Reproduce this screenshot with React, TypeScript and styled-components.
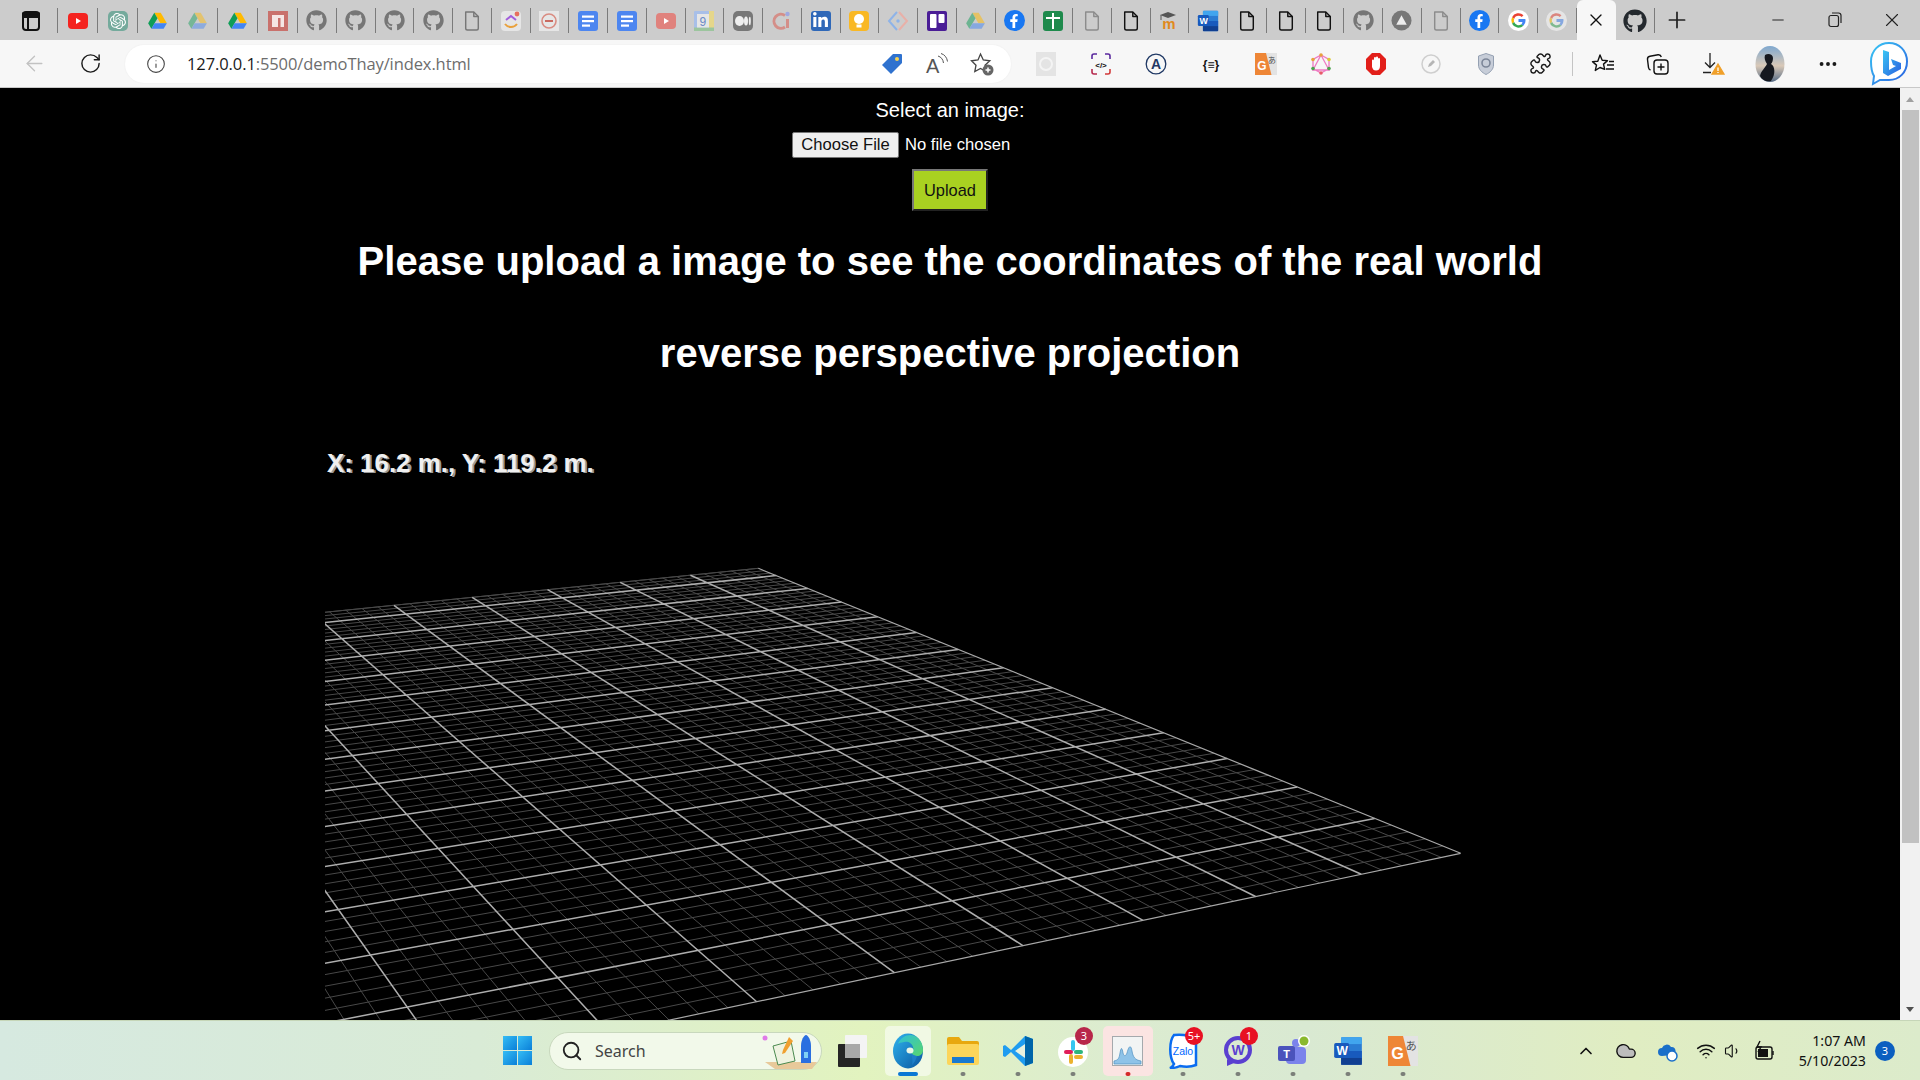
import React, { useMemo } from "react";
import styled, { createGlobalStyle } from "styled-components";
import { ArrowLeft, RotateCw, Info, Puzzle, MoreHorizontal, Plus, X, Minus, Search, ChevronUp, Wifi, Volume1, Cloud } from "lucide-react";
import { FaGithub, FaLinkedinIn, FaFacebookF } from "react-icons/fa";
import { SiOpenai } from "react-icons/si";

const Global = createGlobalStyle`
  html, body { margin: 0; padding: 0; overflow: hidden; background: #000; }
  * { box-sizing: border-box; }
  #root { font-family: "Liberation Sans", Arial, sans-serif; }
`;

const Shell = styled.div`width: 1920px; height: 1080px; display: flex; flex-direction: column; overflow: hidden;`;
const TabStrip = styled.div`height: 40px; background: #cccccc; display: flex; align-items: flex-start; flex: none;`;
const WindowBtn = styled.div`width: 58px; height: 25px; margin-top: 8px; display: flex; align-items: center; padding-left: 21px; border-right: 1px solid #7b7b7b;`;
const TabSlot = styled.div<{ $dim?: number; $pinned?: boolean }>`
  width: ${(p) => (p.$pinned ? "40px" : "38.76px")}; height: 25px; margin-top: 8px; flex: none;
  display: flex; align-items: center; justify-content: center;
  border-right: 1px solid #7b7b7b;
  & > * { opacity: ${(p) => p.$dim ?? 1}; }
`;
const ActiveTab = styled.div`
  width: 39px; height: 40px; flex: none; background: #f7f7f7; border-radius: 6px 6px 0 0;
  display: flex; align-items: center; justify-content: center; color: #111;
`;
const NewTab = styled.div`width: 44px; height: 40px; display: flex; align-items: center; justify-content: center; color: #222;`;
const WinControls = styled.div`margin-left: auto; display: flex; height: 40px;`;
const WinControl = styled.div`width: 57px; height: 40px; display: flex; align-items: center; justify-content: center; color: #222;`;

const Toolbar = styled.div`height: 48px; flex: none; background: #f7f7f7; border-bottom: 1px solid #c8c8c8; display: flex; align-items: center;`;
const NavBtn = styled.div<{ $w: number }>`width: ${(p) => p.$w}px; height: 38px; flex: none; display: flex; align-items: center; justify-content: center;`;
const Omnibox = styled.div`width: 886px; height: 38px; flex: none; margin-left: 13px; background: #fff; border-radius: 19px; display: flex; align-items: center; box-shadow: 0 0 2px rgba(0,0,0,.06);`;
const InfoSlot = styled.div`width: 62px; flex: none; display: flex; justify-content: center; color: #444;`;
const Url = styled.div`flex: 1; font-family: "Open Sans", sans-serif; font-size: 16.5px; color: #6d6d6d; white-space: nowrap; letter-spacing: -0.1px;`;
const Host = styled.span`color: #1a1a1a;`;
const OmniIcons = styled.div`display: flex; align-items: center; margin-right: 7px;`;
const OmniIcon = styled.div`width: 45px; display: flex; justify-content: center; align-items: center;`;
const ToolIcons = styled.div`display: flex; align-items: center; margin-left: 7px;`;
const ToolSlot = styled.div<{ $w?: number }>`width: ${(p) => p.$w ?? 55}px; height: 38px; flex: none; display: flex; align-items: center; justify-content: center; color: #1a1a1a;`;
const BingSlot = styled.div`width: 52px; height: 46px; flex: none; display: flex; align-items: center; justify-content: flex-end;`;
const ToolSep = styled.div`width: 1px; height: 24px; background: #c4c4c4; margin: 0 2px 0 4px; flex: none;`;

const Viewport = styled.div`flex: 1; min-height: 0; display: flex; background: #000; overflow: hidden;`;
const Page = styled.main`flex: 1; min-width: 0; display: flex; flex-direction: column; align-items: center; color: #fff; padding-top: 11px;`;
const Label = styled.label`font-size: 20px; line-height: 23px; color: #fff;`;
const FileInput = styled.input`
  display: block; width: 316px; height: 26px; margin-top: 10px; color: #fff;
  font: 16.6px "Liberation Sans", Arial, sans-serif;
  &::file-selector-button {
    width: 107px; height: 26px; padding: 0; margin: 0 6px 0 0; background: #efefef; color: #111;
    border: 1px solid #767676; border-radius: 2px; font: inherit;
  }
`;
const UploadBtn = styled.button`
  width: 76px; height: 42px; margin-top: 11px; padding: 0; flex: none; background: #a9d121; color: #111;
  border: 2px outset #777; font: 16.4px "Liberation Sans", Arial, sans-serif;
`;
const Title = styled.h1<{ $first?: boolean }>`
  margin: ${(p) => (p.$first ? "27px 0 46px" : "0 0 46px")}; font-size: 40px; line-height: 46px; font-weight: 700; color: #fff; white-space: nowrap; text-align: center;
`;
const CanvasFrame = styled.div`position: relative; width: 1250px; height: 640px; flex: none;`;
const GridSvg = styled.svg`display: block;`;
const Readout = styled.div`position: absolute; left: 4px; top: 27px; font-size: 25.9px; line-height: 30px; font-weight: 700; color: #9a9a9a; white-space: nowrap;`;
const ReadoutGhost = styled.span`position: absolute; left: -2px; top: -1.4px; color: #f0f0f0;`;

const Scrollbar = styled.div`width: 20px; flex: none; background: #f1f1f1; display: flex; flex-direction: column; align-items: center;`;
const ScrollArrow = styled.div<{ $down?: boolean }>`
  height: 22px; flex: none; display: flex; align-items: center; justify-content: center;
  &::before { content: ""; border-left: 4.5px solid transparent; border-right: 4.5px solid transparent;
    ${(p) => (p.$down ? "border-top: 5px solid #505050;" : "border-bottom: 5px solid #a0a0a0;")} }
`;
const ScrollThumb = styled.div`width: 17px; height: 733px; background: #c1c1c1; flex: none;`;
const ScrollRest = styled.div`flex: 1;`;

const Taskbar = styled.footer`
  height: 60px; flex: none; display: flex; align-items: center; padding-left: 503px; border-top: 1px solid #c6d6b8;
  background: linear-gradient(90deg, #d6e9e0 0%, #d9ebd6 25%, #e2f3bf 45%, #dcecd0 58%, #d9e9d2 68%, #e0edc2 85%, #dcebcb 100%);
`;
const StartBtn = styled.div`width: 29px; height: 29px; flex: none; display: grid; grid-template-columns: 1fr 1fr; grid-template-rows: 1fr 1fr; gap: 1.5px;`;
const Pane = styled.div`background: linear-gradient(135deg, #35bdf5, #0a7fd8);`;
const SearchPill = styled.div`
  width: 273px; height: 38px; margin-left: 17px; flex: none; border-radius: 19px; background: #f2f9ea; border: 1px solid #c8d8bd;
  display: flex; align-items: center; padding-left: 11px; color: #222;
`;
const SearchText = styled.span`font-family: "Noto Sans", sans-serif; font-size: 16px; margin-left: 12px; color: #444; flex: 1;`;
const AppRow = styled.div`display: flex; margin-left: 3px;`;
const AppSlot = styled.div<{ $bg?: string; $w?: number }>`
  width: ${(p) => p.$w ?? 55}px; margin: 0 ${(p) => (55 - (p.$w ?? 55)) / 2}px; height: 50px; flex: none; position: relative;
  display: flex; align-items: center; justify-content: center; border-radius: 5px;
  background: ${(p) => p.$bg ?? "transparent"};
`;
const Indicator = styled.span<{ $c?: string; $w?: number }>`
  position: absolute; bottom: 0; left: 50%; transform: translateX(-50%); height: 4px; border-radius: 2px;
  width: ${(p) => p.$w ?? 5}px; background: ${(p) => p.$c ?? "#7b7f79"};
`;
const Badge = styled.span<{ $c?: string }>`
  position: absolute; top: 1px; right: 7px; min-width: 18px; height: 18px; border-radius: 9px; background: ${(p) => p.$c ?? "#e81123"}; color: #fff;
  font: 11px/18px "Noto Sans", sans-serif; text-align: center; padding: 0 2px;
`;
const Tray = styled.div`margin-left: auto; display: flex; align-items: center; padding-right: 25px; color: #111;`;
const TraySlot = styled.div<{ $w: number }>`width: ${(p) => p.$w}px; flex: none; display: flex; justify-content: center; align-items: center;`;
const Clock = styled.div`width: 78px; flex: none; text-align: right; font-family: "Noto Sans", sans-serif; font-size: 14.2px; line-height: 20px; color: #111; white-space: nowrap;`;
const Notif = styled.div`width: 20px; height: 20px; border-radius: 50%; background: #0b5fc0; color: #fff; font: 11px/20px "Noto Sans", sans-serif; text-align: center; margin-left: 9px;`;

const SquareLogo = styled.div<{ $bg: string; $r?: number; $s?: number }>`
  width: ${(p) => p.$s ?? 20}px; height: ${(p) => p.$s ?? 20}px; border-radius: ${(p) => p.$r ?? 3}px; background: ${(p) => p.$bg}; color: #fff;
  display: flex; align-items: center; justify-content: center;
`;

const tf = "'Liberation Sans', Arial, sans-serif";

const Drive = ({ s = 21 }: { s?: number }) => (
  <svg width={s} height={s} viewBox="0 0 24 24"><path d="M8.3 3h7.4l7 12h-7.400z" fill="#ffba00" /><path d="M8.3 3 1.3 15l3.7 6.500 7-12.200z" fill="#0f9d58" /><path d="M5 21.500h14l3.700-6.500H8.700z" fill="#4285f4" /></svg>
);
const FileIco = ({ c = "#111" }: { c?: string }) => (
  <svg width="18" height="22" viewBox="0 0 20 24" fill="none" stroke={c} strokeWidth="1.6" strokeLinejoin="round"><path d="M3 2h9l5 5v13a2 2 0 0 1-2 2H5a2 2 0 0 1-2-2z" /><path d="M12 2v5h5" /></svg>
);
const Yt = ({ c = "#f4231f" }: { c?: string }) => (
  <svg width="22" height="20" viewBox="0 0 22 20"><rect x="1" y="2" width="20" height="16" rx="4" fill={c} /><path d="M9 7l5 3-5 3z" fill="#fff" /></svg>
);
const Docs = () => (
  <svg width="20" height="20" viewBox="0 0 20 20"><rect width="20" height="20" rx="3" fill="#4d86f0" /><rect x="4" y="4.500" width="12" height="2.200" fill="#fff" /><rect x="4" y="9" width="12" height="2.200" fill="#fff" /><rect x="4" y="13.500" width="8" height="2.200" fill="#fff" /></svg>
);
const GoogleG = () => (
  <svg width="21" height="21" viewBox="0 0 24 24"><circle cx="12" cy="12" r="12" fill="#fff" /><path d="M12 6.500a5.500 5.500 0 0 1 3.700 1.400l2-2A8.300 8.300 0 0 0 4.600 8.300l2.400 1.900A5.300 5.300 0 0 1 12 6.500z" fill="#ea4335" /><path d="M4.600 8.300a8.300 8.300 0 0 0 0 7.400L7 13.800a5.300 5.300 0 0 1 0-3.600z" fill="#fbbc05" /><path d="M4.600 15.700A8.300 8.300 0 0 0 17.600 18l-2.300-1.800A5.300 5.300 0 0 1 7 13.800z" fill="#34a853" /><path d="M20 12c0-.5 0-1-.2-1.600H12v3.200h4.500a4 4 0 0 1-1.200 2.600l2.300 1.800A8.300 8.300 0 0 0 20 12z" fill="#4285f4" /></svg>
);
const Fb = () => (<SquareLogo $bg="#1877f2" $r={10.5} $s={21}><FaFacebookF size={14} /></SquareLogo>);
const Gh = ({ c = "#767676", s = 21 }: { c?: string; s?: number }) => <FaGithub size={s} color={c} />;
const GTrans = ({ s = 24 }: { s?: number }) => (
  <svg width={s} height={s} viewBox="0 0 24 24"><path d="M12 0h12v24H8z" fill="#e3e3e3" /><path d="M0 0h12l6 24H0z" fill="#ee8636" /><text x="2.500" y="18" fontFamily={tf} fontWeight="700" fontSize="13" fill="#fff">G</text><text x="14" y="11" fontFamily="'Noto Sans CJK JP', sans-serif" fontSize="9" fill="#555">あ</text></svg>
);
const WordIco = ({ s = 22 }: { s?: number }) => (
  <svg width={s} height={s} viewBox="0 0 26 26"><rect x="7" y="1" width="18" height="24" rx="1.500" fill="#2b7cd3" /><rect x="7" y="1" width="18" height="6" fill="#41a5ee" /><rect x="7" y="13" width="18" height="6" fill="#185abd" /><rect x="7" y="19" width="18" height="6" fill="#103f91" /><rect x="1" y="6" width="13" height="13" rx="1.500" fill="#185abd" /><text x="3" y="16.500" fontFamily={tf} fontWeight="700" fontSize="10.500" fill="#fff">W</text></svg>
);
const Moodle = () => (
  <svg width="24" height="22" viewBox="0 0 24 22"><path d="M3 5l8-3 8 3-8 3z" fill="#555" /><path d="M4 5v5" stroke="#555" strokeWidth="1" /><text x="12" y="19" textAnchor="middle" fontFamily={tf} fontWeight="700" fontSize="15" fill="#e08a1e">m</text></svg>
);

const tabs: [React.ReactNode, number?][] = [
  [<Yt />], [<SquareLogo $bg="#74aa9c" $r={5}><SiOpenai size={16} /></SquareLogo>], [<Drive />], [<Drive />, 0.45], [<Drive />],
  [<SquareLogo $bg="#c9716c" $r={0}><svg width="14" height="14" viewBox="0 0 14 14"><path d="M1 1h12v12H9.500V4H7v9H1z" fill="#f5e6e4" /></svg></SquareLogo>],
  [<Gh />], [<Gh />], [<Gh />], [<Gh />],
  [<FileIco c="#777" />],
  [<svg width="20" height="20" viewBox="0 0 20 20"><rect width="20" height="20" rx="4" fill="#e6e6e6" /><path d="M4 13c3 4 9 4 12 0" fill="none" stroke="#e9a13c" strokeWidth="2" /><path d="M5 9l5-4 5 4" fill="none" stroke="#a25ddc" strokeWidth="2" /><circle cx="16" cy="3" r="2.400" fill="#e6705f" /></svg>],
  [<svg width="20" height="20" viewBox="0 0 20 20"><rect width="20" height="20" fill="#e6e6e6" /><circle cx="10" cy="10" r="7" fill="none" stroke="#d98c82" strokeWidth="1.600" /><rect x="6" y="9" width="8" height="2" fill="#c96a60" /></svg>],
  [<Docs />], [<Docs />], [<Yt c="#e0827d" />],
  [<svg width="20" height="20" viewBox="0 0 20 20"><rect width="20" height="20" rx="1" fill="#a8bfe8" /><rect x="15" width="5" height="20" fill="#e5d68a" /><rect y="16.500" width="20" height="3.500" fill="#9cc59e" /><rect x="3" y="3" width="12" height="13.500" fill="#e6e6e6" /><text x="5.500" y="14.500" fontFamily={tf} fontSize="12" fill="#6b8bc8">9</text></svg>],
  [<SquareLogo $bg="#777" $r={5}><svg width="16" height="10" viewBox="0 0 16 10"><ellipse cx="4.500" cy="5" rx="4.500" ry="5" fill="#eee" /><ellipse cx="11" cy="5" rx="2" ry="4.600" fill="#eee" /><ellipse cx="14.800" cy="5" rx="1" ry="4.200" fill="#eee" /></svg></SquareLogo>],
  [<svg width="20" height="22" viewBox="0 0 20 22" fill="none"><path d="M13 5.500A7 7 0 1 0 13 17" stroke="#d48e88" strokeWidth="3" /><path d="M15.500 9v9" stroke="#d48e88" strokeWidth="3" /><circle cx="15.500" cy="4" r="2.200" fill="#9fa8e0" /></svg>],
  [<SquareLogo $bg="#2f68b8"><FaLinkedinIn size={17} /></SquareLogo>],
  [<SquareLogo $bg="#f9b824" $r={4}><svg width="12" height="16" viewBox="0 0 12 16"><circle cx="6" cy="6" r="5" fill="#fff" /><rect x="3.500" y="11.500" width="5" height="3" fill="#fff" /></svg></SquareLogo>],
  [<svg width="22" height="22" viewBox="0 0 22 22" fill="none"><path d="M10 2 2 11l8 9" stroke="#8eb3e8" strokeWidth="2" /><path d="M12 2l8 9-8 9" stroke="#e8b0a8" strokeWidth="2" /><circle cx="11" cy="11" r="1.700" fill="#8eb3e8" /></svg>],
  [<svg width="20" height="20" viewBox="0 0 20 20"><rect width="20" height="20" rx="2" fill="#4a1d96" /><rect x="3" y="3" width="6.500" height="14" rx="1" fill="#fff" /><rect x="11.500" y="3" width="6" height="9" rx="1" fill="#fff" /></svg>],
  [<Drive />, 0.5], [<Fb />],
  [<SquareLogo $bg="#1e8a4c"><svg width="14" height="16" viewBox="0 0 14 16"><rect y="4" width="14" height="2" fill="#fff" /><rect x="6" width="2" height="16" fill="#fff" /></svg></SquareLogo>],
  [<FileIco c="#8c8c8c" />], [<FileIco />],
  [<Moodle />], [<WordIco />],
  [<FileIco />], [<FileIco />], [<FileIco />],
  [<Gh />],
  [<svg width="21" height="21" viewBox="0 0 22 22"><circle cx="11" cy="11" r="10.500" fill="#777" /><path d="M11 5.500l5.500 10h-11z" fill="#ededed" /></svg>],
  [<FileIco c="#8c8c8c" />], [<Fb />], [<GoogleG />], [<GoogleG />, 0.5],
];

const grid = () => {
  const [x0, y0] = [1460.7, 853.3];
  const [x1, y1] = [756.7, 1001.7];
  const [x2, y2] = [313, 613.5];
  const [x3, y3] = [758.3, 568.3];
  const S = 6, T = 13.6;
  const dx1 = x1 - x2, dx2 = x3 - x2, sx = x0 - x1 + x2 - x3;
  const dy1 = y1 - y2, dy2 = y3 - y2, sy = y0 - y1 + y2 - y3;
  const den = dx1 * dy2 - dx2 * dy1;
  const g = (sx * dy2 - dx2 * sy) / den;
  const h = (dx1 * sy - sx * dy1) / den;
  const a = x1 - x0 + g * x1, b = x3 - x0 + h * x3, d = y1 - y0 + g * y1, e = y3 - y0 + h * y3;
  const P = (s: number, t: number) => {
    const u = s / S, v = t / T;
    const w = g * u + h * v + 1;
    return [((a * u + b * v + x0) / w - 325).toFixed(1), ((d * u + e * v + y0) / w - 422).toFixed(1)];
  };
  const Smax = 16;
  const major: string[] = [], minor: string[] = [], edge: string[] = [];
  const seg = (p: string[], q: string[]) => `M${p[0]} ${p[1]}L${q[0]} ${q[1]}`;
  for (let i = 0; i <= Smax * 5; i++) {
    const s = i / 5;
    const path = seg(P(s, 0), P(s, T));
    (i === 0 ? edge : i % 5 === 0 ? major : minor).push(path);
  }
  for (let i = 0; i <= 68; i++) {
    const t = i / 5;
    const path = seg(P(0, t), P(Smax, t));
    (i === 0 ? edge : i % 5 === 0 ? major : minor).push(path);
  }
  minor.push(seg(P(0, T), P(Smax, T)));
  return { major: major.join(""), minor: minor.join(""), edge: edge.join("") };
};

export default function App() {
  const g = useMemo(grid, []);
  return (
    <Shell>
      <Global />
      <TabStrip>
        <WindowBtn>
          <svg width="20" height="22" viewBox="0 0 20 22" fill="none" stroke="#111" strokeWidth="2"><rect x="2" y="2" width="16" height="18" rx="3" /><path d="M2 3.500h16V7H2z" fill="#111" /><path d="M7 7v13" /></svg>
        </WindowBtn>
        {tabs.map(([node, dim], i) => (
          <TabSlot key={i} $dim={dim} $pinned={i < 6}>{node}</TabSlot>
        ))}
        <ActiveTab><X size={20} strokeWidth={1.6} /></ActiveTab>
        <TabSlot><Gh c="#24292e" s={24} /></TabSlot>
        <NewTab><Plus size={26} strokeWidth={1.6} /></NewTab>
        <WinControls>
          <WinControl><Minus size={18} strokeWidth={1.3} /></WinControl>
          <WinControl>
            <svg width="16" height="18" viewBox="0 0 16 18" fill="none" stroke="#222" strokeWidth="1.2"><rect x="2" y="4.500" width="9.500" height="11" rx="2" /><path d="M5 2h6.500A2.500 2.500 0 0 1 14 4.500V12" /></svg>
          </WinControl>
          <WinControl><X size={22} strokeWidth={1.2} /></WinControl>
        </WinControls>
      </TabStrip>

      <Toolbar>
        <NavBtn $w={68}><ArrowLeft size={25} strokeWidth={1.3} color="#c2c2c2" /></NavBtn>
        <NavBtn $w={44}><RotateCw size={23} strokeWidth={1.5} color="#1a1a1a" /></NavBtn>
        <Omnibox>
          <InfoSlot><Info size={20} strokeWidth={1.3} /></InfoSlot>
          <Url><Host>127.0.0.1</Host>:5500/demoThay/index.html</Url>
          <OmniIcons>
            <OmniIcon>
              <svg width="22" height="24" viewBox="0 0 22 24"><path d="M12 2h8a1 1 0 0 1 1 1v8L10 22 1 13z" fill="#2f72cf" /><circle cx="16" cy="7" r="2" fill="#f5d354" /></svg>
            </OmniIcon>
            <OmniIcon>
              <svg width="24" height="24" viewBox="0 0 24 24" fill="none" stroke="#555" strokeWidth="1"><text x="1" y="21" fontFamily={tf} fontSize="20" fill="#555" stroke="none">A</text><path d="M13 4c3 1 5 3 5.500 7M16 1.500c3.500 1 6 4 6.500 8" /></svg>
            </OmniIcon>
            <OmniIcon>
              <svg width="24" height="24" viewBox="0 0 24 24" fill="none" stroke="#444" strokeWidth="1.3"><path d="M10.500 2l2.800 6 6.500.8-4.800 4.400 1.200 6.400-5.700-3.200-5.700 3.200 1.200-6.400L1.500 8.800 8 8z" /><circle cx="18" cy="18" r="5.500" fill="#666" stroke="none" /><path d="M18 15.500v5M15.500 18h5" stroke="#fff" strokeWidth="1.5" /></svg>
            </OmniIcon>
          </OmniIcons>
        </Omnibox>
        <ToolIcons>
          <ToolSlot><svg width="20" height="24" viewBox="0 0 20 24"><rect width="20" height="24" fill="#e4e4e4" /><circle cx="10" cy="12" r="6" fill="none" stroke="#f4f4f4" strokeWidth="2" /></svg></ToolSlot>
          <ToolSlot>
            <svg width="20" height="24" viewBox="0 0 20 24" fill="none" strokeWidth="1.600"><path d="M1 7V4a2 2 0 0 1 2-2h3" stroke="#5b2a9e" /><path d="M14 2h3a2 2 0 0 1 2 2v3" stroke="#5b2a9e" /><path d="M1 17v3a2 2 0 0 0 2 2h3" stroke="#b62a4e" /><path d="M14 22h3a2 2 0 0 0 2-2v-3" stroke="#d23a3a" /><text x="10" y="15.500" textAnchor="middle" fontFamily={tf} fontWeight="700" fontSize="8" fill="#111" stroke="none">{"</>"}</text></svg>
          </ToolSlot>
          <ToolSlot>
            <svg width="22" height="22" viewBox="0 0 22 22" fill="none"><circle cx="11" cy="11" r="9.800" stroke="#1f3864" strokeWidth="1.300" /><text x="11" y="16" textAnchor="middle" fontFamily={tf} fontWeight="700" fontSize="14" fill="#1f3864">A</text></svg>
          </ToolSlot>
          <ToolSlot>
            <svg width="24" height="16" viewBox="0 0 24 16"><text x="12" y="12.500" textAnchor="middle" fontFamily={tf} fontWeight="700" fontSize="12" fill="#111">{"{≡}"}</text></svg>
          </ToolSlot>
          <ToolSlot><GTrans s={22} /></ToolSlot>
          <ToolSlot>
            <svg width="20" height="22" viewBox="0 0 20 22" fill="none"><path d="M10 2 18 17H2z M10 2 18 6.500v9L10 20 2 15.500v-9z" stroke="#ef7ac3" strokeWidth="1.300" /><circle cx="10" cy="2" r="1.800" fill="#e8a23c" /><circle cx="18" cy="6.500" r="1.800" fill="#dccb3a" /><circle cx="18" cy="15.500" r="1.800" fill="#4aa34e" /><circle cx="2" cy="6.500" r="1.800" fill="#e8a23c" /><circle cx="2" cy="15.500" r="1.800" fill="#4aa34e" /><circle cx="10" cy="20" r="1.800" fill="#e85a6a" /></svg>
          </ToolSlot>
          <ToolSlot>
            <svg width="22" height="24" viewBox="0 0 22 24"><path d="M7 1h8l6 6v10l-6 6H7l-6-6V7z" fill="#e21f1a" /><path d="M7 15V8.500a1 1 0 0 1 2 0V6a1 1 0 0 1 2 0v-.5a1 1 0 0 1 2 0V7a1 1 0 0 1 2 0v7c0 3-1.500 4.500-4 4.500s-3-1-4-3.500z" fill="#fff" /></svg>
          </ToolSlot>
          <ToolSlot>
            <svg width="20" height="20" viewBox="0 0 20 20" fill="none"><circle cx="10" cy="10" r="9" stroke="#cfcfcf" strokeWidth="1.500" /><path d="M7 13l1-3 4-4 2 2-4 4z" fill="#b5b5b5" /></svg>
          </ToolSlot>
          <ToolSlot>
            <svg width="18" height="24" viewBox="0 0 18 24" fill="none"><path d="M9 1.500 16.500 4v9c0 4.500-3.500 7.500-7.500 9.500C5 20.500 1.500 17.500 1.500 13V4z" fill="#c7cdd8" stroke="#94a0b2" /><circle cx="9" cy="11" r="4" stroke="#7c8698" strokeWidth="1.600" /></svg>
          </ToolSlot>
          <ToolSlot><Puzzle size={23} strokeWidth={1.5} /></ToolSlot>
          <ToolSep />
          <ToolSlot>
            <svg width="24" height="24" viewBox="0 0 24 24" fill="none" stroke="#111" strokeWidth="1.400" strokeLinejoin="round"><path d="M9 3l2.200 5.200 5.300.4-4 3.500 1.200 5.300L9 15.500l-4.700 2.900 1.200-5.300-4-3.500 5.300-.4z" /><path d="M16 13h7M15 17h8M18 9.500h5" /></svg>
          </ToolSlot>
          <ToolSlot>
            <svg width="24" height="24" viewBox="0 0 24 24" fill="none" stroke="#111" strokeWidth="1.400"><rect x="8" y="8" width="14" height="14" rx="3" /><path d="M15 11.500v7M11.500 15h7" /><path d="M4.500 18A3 3 0 0 1 2.500 15.500l-1-8A3 3 0 0 1 4 4.200l8-1.400a3 3 0 0 1 3.300 2.200" /></svg>
          </ToolSlot>
          <ToolSlot $w={56}>
            <svg width="24" height="24" viewBox="0 0 24 24" fill="none" stroke="#222" strokeWidth="1.300"><path d="M9 1v14M4 10.500l5 5 5-5M2 20.500h8" /><path d="M17 12l6 10H11z" fill="#f0a02a" stroke="#f0a02a" /><path d="M17 15.500v3.500M17 20v1" stroke="#fff" /></svg>
          </ToolSlot>
          <ToolSlot $w={58}>
            <svg width="30" height="36" viewBox="0 0 30 36"><defs><linearGradient id="sky" x1="0" y1="0" x2="0" y2="1"><stop offset="0" stopColor="#7fa8cf" /><stop offset="0.55" stopColor="#d9c9b8" /><stop offset="1" stopColor="#556a84" /></linearGradient></defs><ellipse cx="15" cy="18" rx="14.500" ry="18" fill="url(#sky)" /><path d="M10 9c3-2 8-1 8 3 0 3-1 5-2 6 4 2 5 10 0 17-5 1-9-1-11-5 1-5 5-8 7-12-2-3-3-6-2-9z" fill="#15181f" /></svg>
          </ToolSlot>
          <ToolSlot $w={58}><MoreHorizontal size={22} strokeWidth={2.2} /></ToolSlot>
          <BingSlot>
            <svg width="40" height="46" viewBox="0 0 40 46"><defs><linearGradient id="bing" x1="0" y1="0" x2="1" y2="1"><stop offset="0" stopColor="#39c6f4" /><stop offset="1" stopColor="#2a5fe0" /></linearGradient></defs><path d="M20 2c10 0 18 7.500 18 18.500S30 39 20 39H11l-7 4 1-8C2.500 31 2 26 2 20.500 2 9.500 10 2 20 2z" fill="#fff" stroke="url(#bing)" strokeWidth="2" /><path d="M14 9l6 2v18l7-4-3-1-2-6 10 4v6l-13 7-5-3z" fill="url(#bing)" /></svg>
          </BingSlot>
        </ToolIcons>
      </Toolbar>

      <Viewport>
        <Page>
          <Label htmlFor="img">Select an image:</Label>
          <FileInput id="img" type="file" />
          <UploadBtn type="button">Upload</UploadBtn>
          <Title $first>Please upload a image to see the coordinates of the real world</Title>
          <Title>reverse perspective projection</Title>
          <CanvasFrame>
            <GridSvg width="1250" height="640" viewBox="0 0 1250 640" fill="none" aria-hidden>
              <path d={g.minor} stroke="#484848" strokeWidth="1" />
              <path d={g.major} stroke="#aeaeae" strokeWidth="1.500" />
              <path d={g.edge} stroke="#a8a8a8" strokeWidth="1.200" />
            </GridSvg>
            <Readout>
              X: 16.3 m., Y: 119.3 m.
              <ReadoutGhost>X: 16.2 m., Y: 119.2 m.</ReadoutGhost>
            </Readout>
          </CanvasFrame>
        </Page>
        <Scrollbar>
          <ScrollArrow />
          <ScrollThumb />
          <ScrollRest />
          <ScrollArrow $down />
        </Scrollbar>
      </Viewport>

      <Taskbar>
        <StartBtn><Pane /><Pane /><Pane /><Pane /></StartBtn>
        <SearchPill>
          <Search size={22} strokeWidth={2} />
          <SearchText>Search</SearchText>
          <svg width="62" height="38" viewBox="0 0 62 38"><path d="M6 30h52l-5 7H16z" fill="#e8c99a" /><path d="M14 14l18-5 4 20-17 4z" fill="#eef3e0" stroke="#4b8a4f" /><path d="M30 5l4 4-8 12-3 1 1-4z" fill="#f0a030" /><path d="M42 14c0-6 3-11 5-11s5 5 5 11v17H42z" fill="#2a6fe0" /><path d="M45 20h4v6h-4z" fill="#7fd0f5" /><circle cx="6" cy="6" r="2.500" fill="#e07ae8" /></svg>
        </SearchPill>
        <AppRow>
          <AppSlot>
            <svg width="30" height="32" viewBox="0 0 30 32"><rect x="7" y="0" width="22" height="23" rx="1" fill="#f4f4f4" /><rect x="0" y="9" width="22" height="23" rx="1" fill="#252525" /><rect x="7" y="9" width="15" height="14" fill="#a8a8a8" /></svg>
          </AppSlot>
          <AppSlot $bg="rgba(255,255,255,.55)" $w={46}>
            <svg width="32" height="36" viewBox="0 0 32 36"><defs><linearGradient id="edge" x1="0" y1="0" x2="1" y2="1"><stop offset="0" stopColor="#2fb4ee" /><stop offset="1" stopColor="#0b56a0" /></linearGradient><linearGradient id="edgeg" x1="0" y1="0" x2="1" y2="1"><stop offset="0" stopColor="#2fc0d8" /><stop offset="1" stopColor="#58d66c" /></linearGradient></defs><ellipse cx="16" cy="18" rx="15" ry="17.500" fill="url(#edge)" /><path d="M6 11C9 3 17 0.500 23 3c6 3 8 9 8 14 0 4-3 6-6 6-3 0-5-1-6-3 2-1 3-3 2-6-1-4-5-6-9-5-3 .5-5 1-6 2z" fill="url(#edgeg)" /><path d="M19 20c2 2 4 3 6 3-1 4-3 7-5 9 1-4 0-8-1-12z" fill="#1d7ec9" /><ellipse cx="18" cy="17.500" rx="3.500" ry="3" fill="#eaf6e6" /></svg>
            <Indicator $c="#0a78d4" $w={20} />
          </AppSlot>
          <AppSlot>
            <svg width="34" height="30" viewBox="0 0 34 30"><path d="M1 3a2 2 0 0 1 2-2h10l3 4h15a2 2 0 0 1 2 2v4H1z" fill="#e8a80f" /><rect x="1" y="8" width="32" height="21" rx="2" fill="#fcd55a" /><rect x="6" y="21" width="22" height="6" fill="#1a7ad0" /></svg>
            <Indicator />
          </AppSlot>
          <AppSlot>
            <svg width="32" height="32" viewBox="0 0 32 32"><path d="M23 1 9 15 3 10 1 11v10l2 1 6-5 14 14 8-3V4z" fill="#1f9cf0" /><path d="M23 1v30l8-3V4z" fill="#0065a9" /><path d="M23 9 13 16l10 7z" fill="#e8f1e0" /></svg>
            <Indicator />
          </AppSlot>
          <AppSlot>
            <svg width="30" height="34" viewBox="0 0 30 34"><circle cx="15" cy="18" r="15" fill="#fff" /><rect x="13" y="6" width="4" height="11" rx="2" fill="#36c5f0" /><rect x="6" y="16" width="9" height="4" rx="2" fill="#e01e5a" /><rect x="16" y="16" width="9" height="4" rx="2" fill="#2eb67d" /><rect x="11" y="20" width="4" height="10" rx="2" fill="#ecb22e" /><rect x="16" y="21" width="9" height="4" rx="2" fill="#ecb22e" /></svg>
            <Badge $c="#b8274a">3</Badge>
            <Indicator />
          </AppSlot>
          <AppSlot $bg="#fbe4e2" $w={50}>
            <svg width="31" height="30" viewBox="0 0 31 30"><rect x="0.500" y="0.500" width="30" height="29" fill="#f2f4f4" stroke="#a5a9ad" /><path d="M2 25c4-1 5-2 6-8 1-6 2-6 3 0 1 4 3 3 4 0 2-8 4-8 5-2 1 6 3 9 9 10v3H2z" fill="#8fc3e8" stroke="#4f8fc0" strokeWidth=".7" /></svg>
            <Indicator $c="#d42a2a" />
          </AppSlot>
          <AppSlot>
            <svg width="30" height="36" viewBox="0 0 30 36"><path d="M6 2C1 8 1 24 6 31c-1 2-2 3-4 4 5 0 8-1 10-2 5 1 11 1 16-1V8C26 3 16 1 6 2z" fill="#fff" stroke="#0a6cf0" strokeWidth="2.500" /><text x="15" y="22" textAnchor="middle" fontFamily={tf} fontSize="10.500" fill="#0068ff">Zalo</text></svg>
            <Badge>5+</Badge>
            <Indicator />
          </AppSlot>
          <AppSlot>
            <svg width="30" height="32" viewBox="0 0 30 32" fill="none"><circle cx="15" cy="15" r="12" stroke="#5a3fd0" strokeWidth="4" /><text x="15" y="20" textAnchor="middle" fontFamily={tf} fontWeight="700" fontSize="14" fill="#5a3fd0">W</text><path d="M4 24v7l7-3z" fill="#5a3fd0" /></svg>
            <Badge>1</Badge>
            <Indicator />
          </AppSlot>
          <AppSlot>
            <svg width="34" height="34" viewBox="0 0 34 34"><circle cx="20" cy="9" r="4" fill="#7b83eb" /><rect x="10" y="13" width="20" height="17" rx="4" fill="#7b83eb" /><rect x="2" y="12" width="17" height="15" rx="2" fill="#4b53bc" /><text x="10.500" y="24" textAnchor="middle" fontFamily={tf} fontWeight="700" fontSize="11" fill="#fff">T</text><circle cx="28" cy="7" r="6" fill="#fff" /><circle cx="28" cy="7" r="4.500" fill="#8ab92d" /></svg>
            <Indicator />
          </AppSlot>
          <AppSlot><WordIco s={30} /><Indicator /></AppSlot>
          <AppSlot><GTrans s={30} /><Indicator /></AppSlot>
        </AppRow>
        <Tray>
          <TraySlot $w={40}><ChevronUp size={20} strokeWidth={2} /></TraySlot>
          <TraySlot $w={40}><Cloud size={22} strokeWidth={1.500} fill="#bdbdbd" /></TraySlot>
          <TraySlot $w={42}>
            <svg width="22" height="22" viewBox="0 0 22 22"><path d="M6 16a4 4 0 0 1 0-8 5 5 0 0 1 9-1 4 4 0 0 1 1 8z" fill="#1a6fc9" /><circle cx="16" cy="16" r="5" fill="#fff" stroke="#1a6fc9" strokeWidth="1.500" /></svg>
          </TraySlot>
          <TraySlot $w={36}><Wifi size={20} strokeWidth={1.800} /></TraySlot>
          <TraySlot $w={18}><Volume1 size={20} strokeWidth={1.500} /></TraySlot>
          <TraySlot $w={46}>
            <svg width="24" height="22" viewBox="0 0 24 22" fill="none" stroke="#111" strokeWidth="1.400"><rect x="3" y="7" width="16" height="12" rx="2" /><rect x="5" y="9" width="10" height="8" fill="#111" stroke="none" /><path d="M20 11v4" /><path d="M7 1 4 7h4l-3 5" /></svg>
          </TraySlot>
          <Clock>1:07 AM<br />5/10/2023</Clock>
          <Notif>3</Notif>
        </Tray>
      </Taskbar>
    </Shell>
  );
}
